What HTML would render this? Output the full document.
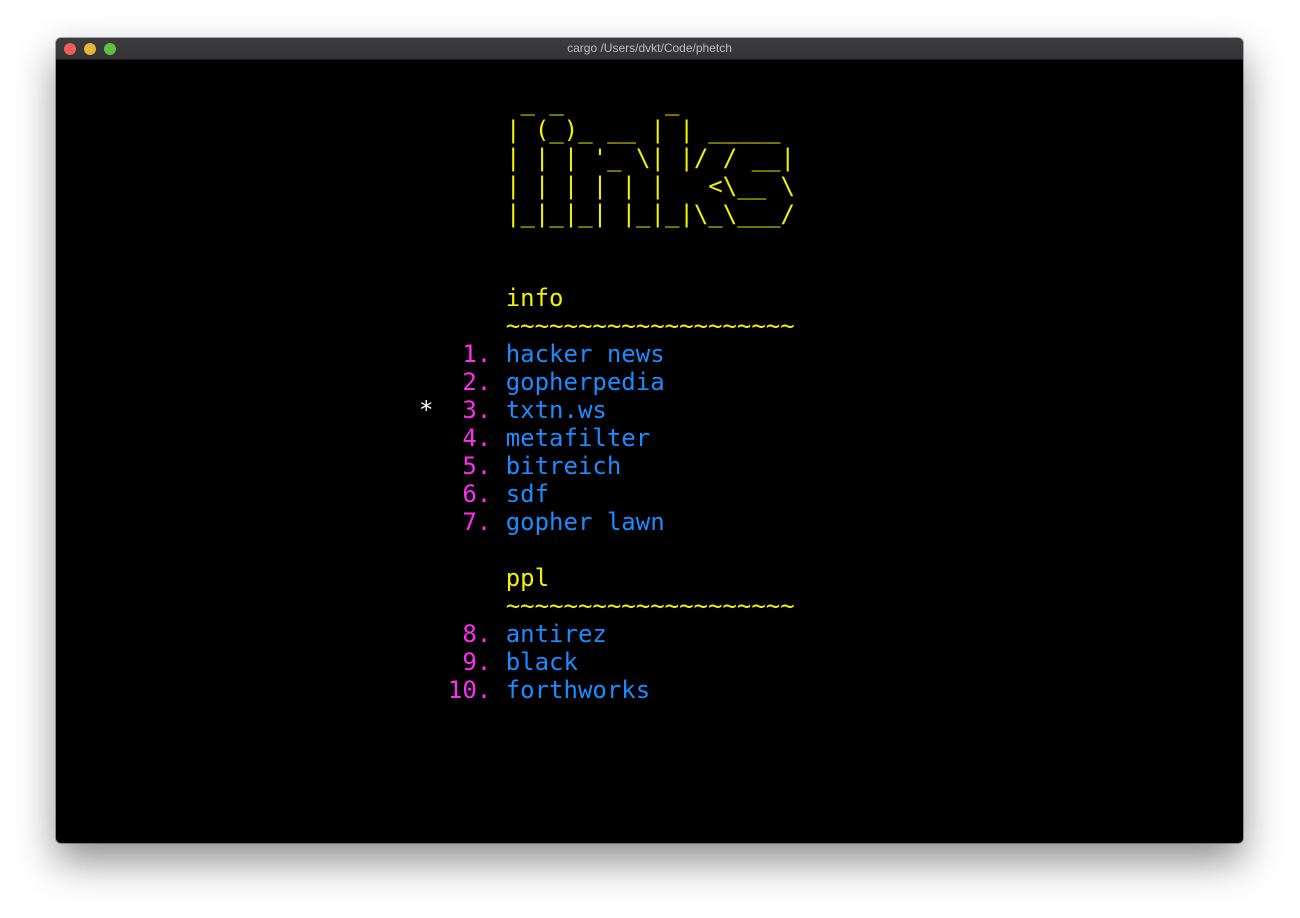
<!DOCTYPE html>
<html><head><style>
html,body{margin:0;padding:0;background:#fff;width:1300px;height:918px;overflow:hidden}
.win{position:absolute;left:56px;top:38px;width:1187px;height:805px;background:#000;border-radius:5px;overflow:hidden;box-shadow:0 18px 40px rgba(0,0,0,.45),0 0 0 1px rgba(0,0,0,.3)}
.tb{height:21px;background:linear-gradient(#3d3d3f,#343436);color:#bdbdbd;font:12px "Liberation Sans",sans-serif;text-align:center;line-height:21px;position:relative;border-bottom:1px solid #1a1a1a}
.d{position:absolute;top:5px;width:12px;height:12px;border-radius:50%}
pre{position:absolute;margin:0;font-family:"DejaVu Sans Mono","Liberation Mono",monospace;font-size:24px;line-height:28px;color:#ff0}
.y{color:#f2f200}.m{color:#ff2df0}.b{color:#1b8cff}.w{color:#fff}
</style></head><body>
<div class="win"><div class="tb"><span class="d" style="left:8px;background:#ee5d56"></span><span class="d" style="left:28px;background:#e2b73e"></span><span class="d" style="left:48px;background:#5fbf42"></span>cargo /Users/dvkt/Code/phetch</div></div>
<pre class="y" style="left:506px;top:88px"> _ _       _
| (_)_ __ | | _____
| | | '_ \| |/ / __|
| | | | | |   &lt;\__ \
|_|_|_| |_|_|\_\___/</pre>
<pre style="left:419px;top:284px"><span class="y">      info</span>
<span class="y">      ~~~~~~~~~~~~~~~~~~~~</span>
<span class="m">   1. </span><span class="b">hacker news</span>
<span class="m">   2. </span><span class="b">gopherpedia</span>
<span class="w">*</span><span class="m">  3. </span><span class="b">txtn.ws</span>
<span class="m">   4. </span><span class="b">metafilter</span>
<span class="m">   5. </span><span class="b">bitreich</span>
<span class="m">   6. </span><span class="b">sdf</span>
<span class="m">   7. </span><span class="b">gopher lawn</span>

<span class="y">      ppl</span>
<span class="y">      ~~~~~~~~~~~~~~~~~~~~</span>
<span class="m">   8. </span><span class="b">antirez</span>
<span class="m">   9. </span><span class="b">black</span>
<span class="m">  10. </span><span class="b">forthworks</span></pre>
</body></html>
